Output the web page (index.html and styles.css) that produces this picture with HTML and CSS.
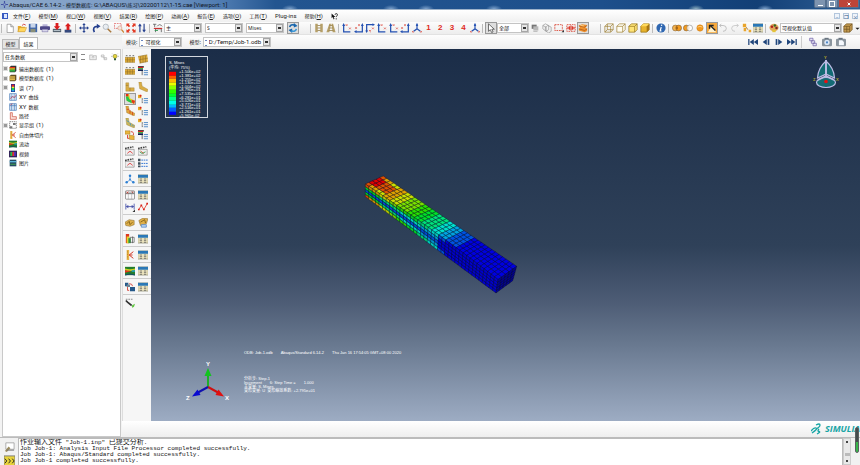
FILE: index.html
```html
<!DOCTYPE html>
<html lang="zh-CN">
<head>
<meta charset="utf-8">
<title>Abaqus/CAE 6.14-2</title>
<link rel="stylesheet" href="styles.css">
</head>
<body>
<svg class="sprite" aria-hidden="true">
  <symbol id="new" viewBox="0 0 12 12"><path d="M2.500 1.500h4.500l3 3v7h-7.500z" fill="#fff" stroke="#777" stroke-width=".7"/><path d="M7 1.500v3h3" fill="#ddd" stroke="#777" stroke-width=".7"/></symbol>
  <symbol id="open" viewBox="0 0 12 12"><path d="M1 10.500V3.500h3.500l1 1h4v6z" fill="#e8a92c"/><path d="M1 10.500l2-5h8.500l-2 5z" fill="#ffd75e" stroke="#b9821a" stroke-width=".5"/><path d="M6 3q2-3 4.500-.5" fill="none" stroke="#c33" stroke-width="1"/></symbol>
  <symbol id="save" viewBox="0 0 12 12"><rect x="1" y="1" width="10" height="10" fill="#3f66ac"/><rect x="3" y="1" width="6" height="4.500" fill="#c9d6ea"/><rect x="3" y="7" width="6" height="4" fill="#8b8f78"/></symbol>
  <symbol id="print" viewBox="0 0 12 12"><path d="M3 1.500h6v3H3z" fill="#b9b5d8"/><rect x="0" y="4" width="12" height="4.500" rx="1" fill="#4d4788"/><path d="M2.500 7.500h7v3h-7z" fill="#d9d7ec" stroke="#4d4788" stroke-width=".5"/></symbol>
  <symbol id="load" viewBox="0 0 12 12"><path d="M1 7h10v4H1z" fill="#56636f"/><path d="M2 9h8" stroke="#c7d1d8"/><path d="M4.300 0h3.400v4h2L6 8.500 2.300 4h2z" fill="#da1e1e"/></symbol>
  <symbol id="store" viewBox="0 0 12 12"><path d="M2 8h8v3.500H2z" fill="#35497d"/><path d="M4.300 8.500h3.400V4h2L6 0 2.300 4h2z" fill="#da1e1e"/></symbol>
  <symbol id="pan" viewBox="0 0 12 12"><path d="M6 0l2 2.500H6.700v2.800h2.800V4L12 6 9.500 8V6.700H6.700v2.800H8L6 12 4 9.500h1.300V6.700H2.500V8L0 6l2.500-2v1.300h2.800V2.500H4z" fill="#26418f"/></symbol>
  <symbol id="rotate" viewBox="0 0 12 12"><path d="M4 11Q1 4 8 4" fill="none" stroke="#26418f" stroke-width="2"/><path d="M7 .8L11.500 4 7 7z" fill="#26418f"/></symbol>
  <symbol id="zoom" viewBox="0 0 12 12"><path d="M6.500 6.500L11 11" stroke="#a9793f" stroke-width="1.800"/><circle cx="4.500" cy="4.500" r="3.200" fill="#e9edf2" stroke="#adb4bc"/></symbol>
  <symbol id="zoombox" viewBox="0 0 12 12"><path d="M.5 .5h8v6h-8z" fill="none" stroke="#d44" stroke-width=".8" stroke-dasharray="2 1"/><circle cx="7" cy="6" r="2.500" fill="#f5e6de" stroke="#d8a08a" stroke-width=".8"/><path d="M9 8l3 3.500" stroke="#c8822e" stroke-width="1.500"/></symbol>
  <symbol id="fit" viewBox="0 0 12 12"><path d="M.5.500h4L3.300 1.700 5 3.500 3.500 5 1.700 3.300.5 4.500zM11.500.500h-4l1.200 1.200L7 3.500 8.500 5l1.800-1.700 1.200 1.200zM.5 11.500h4l-1.200-1.200L5 8.500 3.500 7 1.700 8.700.5 7.500zM11.500 11.500h-4l1.200-1.200L7 8.500 8.500 7l1.800 1.700 1.200-1.200z" fill="#e23822"/></symbol>
  <symbol id="updown" viewBox="0 0 12 12"><path d="M3.500 11V2M8.500 1v9" stroke="#26418f" stroke-width="1.400"/><path d="M1.300 4l2.200-3.500L5.700 4zM6.300 8l2.200 3.500L10.700 8z" fill="#26418f"/></symbol>
  <symbol id="field" viewBox="0 0 12 12"><path d="M0 1.500h4M2 1.500V5M5 4q3-4 6 0M3 11V7h7v4" fill="none" stroke="#555" stroke-width=".9"/><path d="M1 6.500h10" stroke="#cf2b2b" stroke-width="1.300"/><path d="M2 9h4" stroke="#2d9650"/></symbol>
  <symbol id="refresh" viewBox="0 0 12 12"><path d="M2 5q1-4 6-2.500" fill="none" stroke="#1766ae" stroke-width="2"/><path d="M7 0l4.500 3.500L7 5.500zM5 6.500L.5 8.500 5 12z" fill="#1766ae"/><path d="M10 7q-1 4-6 2.500" fill="none" stroke="#3b97d6" stroke-width="2"/></symbol>
  <symbol id="para" viewBox="0 0 12 12"><path d="M1.500 1h3v10h-3zM7.500 1h3v10h-3z" fill="#b59f68"/><path d="M4 3h4M4 6h4M4 9h4" stroke="#9b8550"/></symbol>
  <symbol id="persp" viewBox="0 0 12 12"><path d="M4 1h2L4 11H.5zM6.500 1h2l3 10H8z" fill="#b59f68"/><path d="M4 3h4M4 6h4M3 9h6" stroke="#9b8550"/></symbol>
  <symbol id="ax1" viewBox="0 0 12 12"><path d="M2 2v8.500h8" fill="none" stroke="#2451b2" stroke-width="1.500"/><path d="M.3 3.500L2 0l1.700 3.500z" fill="#2451b2"/><path d="M4.500 1.500l2 2m0-2l-2 2M8.500 5.500l2 2m0-2l-2 2" stroke="#dc5146" stroke-width=".9"/></symbol>
  <symbol id="ax2" viewBox="0 0 12 12"><path d="M10 2v8.500H2" fill="none" stroke="#2451b2" stroke-width="1.500"/><path d="M8.300 3.500L10 0l1.700 3.500zM3 8.500L0 10.500 3 12z" fill="#2451b2"/><path d="M5 1.500l2 2m0-2l-2 2M1.500 5l2 2m0-2l-2 2" stroke="#dc5146" stroke-width=".9"/></symbol>
  <symbol id="ax3" viewBox="0 0 12 12"><path d="M2 10V2h8" fill="none" stroke="#2451b2" stroke-width="1.500"/><path d="M.3 9L2 12l1.700-3zM9 .3L12 2 9 3.700z" fill="#2451b2"/><path d="M8.500 5.500l2 2m0-2l-2 2M5 9l2 2m0-2H5" stroke="#dc5146" stroke-width=".9"/></symbol>
  <symbol id="iso" viewBox="0 0 12 12"><path d="M6 1v6L2 10M6 7l4 3" fill="none" stroke="#2451b2" stroke-width="1.400"/><path d="M4.500 3.500L6 0l1.500 3.500z" fill="#2451b2"/><path d="M0 9.500l2 2m0-2l-2 2M10 9.500l2 2m0-2l-2 2" stroke="#dc5146" stroke-width=".9"/></symbol>
  <symbol id="cursor" viewBox="0 0 12 12"><path d="M3 1v9l2.200-2 1.600 3.500 1.700-.8L7 7.500h3z" fill="#fff" stroke="#333" stroke-width=".8"/></symbol>
  <symbol id="grayset" viewBox="0 0 12 12"><path d="M2 2h6v5H2z" fill="#777"/><path d="M4 4h6v5H4z" fill="#b8b8b8"/><path d="M4 10h5" stroke="#aaa"/></symbol>
  <symbol id="wires" viewBox="0 0 12 12"><path d="M1 3l3-2 4 2v5l-3 2-4-3zM4 5l3-2 4 2v5l-3 2-4-3zM1 3l4 2v5" fill="none" stroke="#888" stroke-width=".7"/></symbol>
  <symbol id="selbox" viewBox="0 0 12 12"><path d="M1 2h9v7H1z" fill="none" stroke="#d8412f" stroke-width="1" stroke-dasharray="2 1"/><path d="M9 11h3V8z" fill="#333"/></symbol>
  <symbol id="selmulti" viewBox="0 0 12 12"><path d="M1 2h10v8H1z" fill="none" stroke="#d8412f" stroke-width="1" stroke-dasharray="2 1"/><path d="M1 6h3M8 6h3M4 4v4M8 4v4M6 3v6" stroke="#d82818" stroke-width="1.400"/></symbol>
  <symbol id="orangebox" viewBox="0 0 12 12"><path d="M1 3l4-1.500 6 1-2 3 2 1.500v2.500l-3 1.500-7-2V7l1.500-1z" fill="#f0922e"/><path d="M1 3.500l7 1.500 3-2M1 7l7 2 3-2" fill="none" stroke="#a34d0d" stroke-width=".8"/><path d="M3 3l4 .5" stroke="#ffe0a0"/></symbol>
  <symbol id="cube-w" viewBox="0 0 12 12"><path d="M1 4h7v7H1zM4 1h7v7H4zM1 4l3-3M8 4l3-3M8 11l3-3M1 11l3-3" fill="none" stroke="#9b7b2e" stroke-width=".8"/></symbol>
  <symbol id="cube-h" viewBox="0 0 12 12"><path d="M1 4h7v7H1zM1 4l3-3h7v7l-3 3M8 4l3-3" fill="#fffdf2" stroke="#9b7b2e" stroke-width=".8"/></symbol>
  <symbol id="cube-l" viewBox="0 0 12 12"><path d="M1 4l3-3h7v7l-3 3H1z" fill="#ffe477" stroke="#8d6b17" stroke-width=".8"/><path d="M1 4h7v7M8 4l3-3" fill="none" stroke="#8d6b17" stroke-width=".8"/></symbol>
  <symbol id="cube-s" viewBox="0 0 12 12"><path d="M1 4l3-3h7v7l-3 3H1z" fill="#e8b32c" stroke="#8d6b17" stroke-width=".8"/><path d="M8 4v7l3-3V1z" fill="#a67512"/><path d="M1 4h7l3-3H4z" fill="#ffd95b"/></symbol>
  <symbol id="info" viewBox="0 0 12 12"><circle cx="6" cy="6" r="5.500" fill="#2f67b1"/><path d="M7 2L6.500 3.500M6.300 5L5 9.500h1.500" fill="none" stroke="#fff" stroke-width="1.500"/></symbol>
  <symbol id="both" viewBox="0 0 12 12"><circle cx="4" cy="6" r="3.500" fill="#f5b24b" stroke="#6e5435" stroke-width=".6"/><circle cx="8" cy="6" r="3.500" fill="#f39b20" stroke="#6e5435" stroke-width=".6"/><path d="M6 3.500q2 2.500 0 5-2-2.500 0-5" fill="#7b4a12"/></symbol>
  <symbol id="halfset" viewBox="0 0 12 12"><circle cx="4" cy="6" r="3.500" fill="#f39b20" stroke="#6e5435" stroke-width=".6"/><circle cx="8" cy="6" r="3.500" fill="#fff" fill-opacity=".8" stroke="#777" stroke-width=".6"/></symbol>
  <symbol id="ball" viewBox="0 0 12 12"><circle cx="6" cy="6" r="3.800" fill="#f39b20" stroke="#c97610" stroke-width=".6"/><path d="M3 5q3-2 6 0" stroke="#ffd38a" fill="none"/></symbol>
  <symbol id="swap" viewBox="0 0 12 12"><path d="M0 0h12v12H0z" fill="#f6a83c"/><path d="M1 11l5-8 5 8z" fill="#fff2cf"/><path d="M3 7V3h5M4 3l6 6" fill="none" stroke="#222" stroke-width="1.600"/></symbol>
  <symbol id="undo" viewBox="0 0 12 12"><path d="M2 3h4q4 0 4 3.500T6 10M4 1L2 3l2 2" fill="none" stroke="#b7b7b7"/></symbol>
  <symbol id="redo" viewBox="0 0 12 12"><path d="M10 3H6Q2 3 2 6.500T6 10M8 1l2 2-2 2" fill="none" stroke="#c4c4c4"/></symbol>
  <symbol id="dots" viewBox="0 0 12 12"><path d="M1 1h4v4H1zM2 6h3v4H2zM8 8h3v3H8z" fill="#e9a52b"/><path d="M5 5l2 3" stroke="#996515"/></symbol>
  <symbol id="table" viewBox="0 0 12 12"><path d="M0 1h12v10H0z" fill="#f4ecc4" stroke="#6b6b55" stroke-width=".5"/><path d="M0 1h12v3.500H0z" fill="#2a78b7"/><path d="M2 6h3M7 6h3M2 8h3M7 8h3M2 10h3M7 10h3" stroke="#555" stroke-width=".9"/></symbol>
  <symbol id="palette" viewBox="0 0 12 12"><ellipse cx="6" cy="5.500" rx="5.500" ry="4.500" fill="#dfa55b"/><circle cx="3.500" cy="4.500" r="1.500" fill="#b21e1e"/><circle cx="7" cy="3" r="1.500" fill="#356b26"/><circle cx="9" cy="6" r="1.500" fill="#802525"/><path d="M4 8h4v3H4z" fill="#e4c43a"/></symbol>
  <symbol id="boxes" viewBox="0 0 12 12"><path d="M1 4l3-3h7v7l-3 3H1z" fill="#c49b50" stroke="#6f5220" stroke-width=".8"/><path d="M1 4h7v7M8 4l3-3M4.500 4v7M1 7.500h7" fill="none" stroke="#6f5220" stroke-width=".8"/></symbol>
  <symbol id="drop" viewBox="0 0 12 12"><path d="M1 4h10L6 9z" fill="#222"/></symbol>
  <symbol id="first" viewBox="0 0 12 12"><path d="M1 2.500v7" stroke="#21467c" stroke-width="1.500"/><path d="M7 2.500v7L2 6zM12 2.500v7L7 6z" fill="#21467c"/></symbol>
  <symbol id="prev" viewBox="0 0 12 12"><path d="M7 2.500v7L2 6z" fill="#21467c"/><path d="M9 2.500v7" stroke="#21467c" stroke-width="2"/></symbol>
  <symbol id="next" viewBox="0 0 12 12"><path d="M5 2.500v7L10 6z" fill="#21467c"/><path d="M3 2.500v7" stroke="#21467c" stroke-width="2"/></symbol>
  <symbol id="last" viewBox="0 0 12 12"><path d="M11 2.500v7" stroke="#21467c" stroke-width="1.500"/><path d="M5 2.500v7L10 6zM0 2.500v7L5 6z" fill="#21467c"/></symbol>
  <symbol id="windows" viewBox="0 0 12 12"><path d="M2 1.500h4v3H2zM4 4.500h4v3H4zM6 7.500h4v3H6z" fill="#e6e3f7" stroke="#7568a8" stroke-width=".9"/></symbol>
  <symbol id="camera" viewBox="0 0 12 12"><rect y="2" width="12" height="9" rx="1.500" fill="#8b959e"/><path d="M3 1h5v2H3z" fill="#687480"/><circle cx="6" cy="6.500" r="3.200" fill="#dbe7f5"/><circle cx="6" cy="6.500" r="1.300" fill="#4f86c5"/></symbol>
  <symbol id="camera2" viewBox="0 0 12 12"><rect y="2" width="12" height="9" rx="1.500" fill="#8b959e"/><path d="M3 1h5v2H3z" fill="#687480"/><path d="M3.500 4h4l2 2v4h-6z" fill="#f4f8fd"/></symbol>
  <symbol id="mesh" viewBox="0 0 12 12"><path d="M0 4h12v6H0z" fill="#dcaa3a"/><path d="M0 4h12M0 7h12M0 10h12M3 4v6M6 4v6M9 4v6" stroke="#8b6a24" stroke-width=".6"/><path d="M1 2h2M5 2h2M9 2h2" stroke="#555"/></symbol>
  <symbol id="mesh2" viewBox="0 0 12 12"><path d="M0 3l11-2 1 8-10 2z" fill="#dcaa3a"/><path d="M0 3l11-2M1 7l11-2M2 11l10-2M3 3v8M6 2v8M9 2v8" stroke="#8b6a24" stroke-width=".6" fill="none"/></symbol>
  <symbol id="opt" viewBox="0 0 12 12"><path d="M0 1h4v4H0z" fill="#e5ad25"/><circle cx="3" cy="2" r="1.200" fill="#d22"/><path d="M5 5v6M5 6h1M5 10h1" stroke="#555" stroke-width=".7"/><path d="M7 5.500h5M7 8h5M7 10.500h5" stroke="#3979bf" stroke-width="1"/></symbol>
  <symbol id="optrgb" viewBox="0 0 12 12"><path d="M0 0h7v2H0z" fill="#444"/><path d="M0 1h6v1.500H0z" fill="#d22"/><path d="M0 2.500h6V4H0z" fill="#3a3"/><path d="M0 4h6v2H0z" fill="#125"/><path d="M7 5.500h5M7 8h5M7 10.500h5" stroke="#3979bf"/><path d="M5 6v5" stroke="#555"/></symbol>
  <symbol id="ell" viewBox="0 0 12 12"><path d="M1 1h3.500v6H11v4H1z" fill="#d9ad45" stroke="#a08240" stroke-width=".5"/><path d="M1 4h3M6 7v4" stroke="#82652a" stroke-width=".6"/></symbol>
  <symbol id="bent" viewBox="0 0 12 12"><path d="M1 0h3l1 5 7 4-1 3-9-4z" fill="#d9ad45" stroke="#a08240" stroke-width=".5"/></symbol>
  <symbol id="contour" viewBox="0 0 12 12"><path d="M1 0h4l1 5 6 3-1 4-9-4z" fill="#e8d620"/><path d="M1 0h3v3H1z" fill="#e52a14"/><path d="M1 3h3l1 3 3 2v3L2 8z" fill="#24c44a"/><path d="M8 7l4 1-1 4-3-2z" fill="#e2361d"/></symbol>
  <symbol id="bentred" viewBox="0 0 12 12"><path d="M1 0h3l1 5 7 4-1 3-9-4z" fill="#e1a33a" stroke="#a08240" stroke-width=".5"/><path d="M2 4h3M6 5v4M9 7v4" stroke="#d44320"/></symbol>
  <symbol id="bentblue" viewBox="0 0 12 12"><path d="M1 0h3l1 5 7 4-1 3-9-4z" fill="#c9b65a" stroke="#a08240" stroke-width=".5"/><path d="M2 3l3 2M6 6l1 3M9 8l1 2" stroke="#3f92c6"/></symbol>
  <symbol id="morph" viewBox="0 0 12 12"><path d="M0 1h6v4H0zM5 6l6 1v5l-6-1z" fill="#e9b53c" stroke="#96701c" stroke-width=".5"/><path d="M7 2q4 0 3 4M3 6v4h2" fill="none" stroke="#d62b1e"/></symbol>
  <symbol id="clap" viewBox="0 0 12 12"><path d="M0 4h11v7H0z" fill="#eee" stroke="#666" stroke-width=".6"/><path d="M0 3l10-2" stroke="#444" stroke-width="2" stroke-dasharray="2 1"/><path d="M3 9q3-5 6 0" fill="none" stroke="#d33"/></symbol>
  <symbol id="clap2" viewBox="0 0 12 12"><path d="M0 4h11v7H0z" fill="#eee" stroke="#666" stroke-width=".6"/><path d="M0 3l10-2" stroke="#444" stroke-width="2" stroke-dasharray="2 1"/><path d="M2 7l3 2 4-2" fill="none" stroke="#2b9b4b"/><path d="M3 6l4 3" stroke="#c53"/></symbol>
  <symbol id="list" viewBox="0 0 12 12"><path d="M0 1h3v3H0zM0 5h3v3H0zM0 9h3v2H0z" fill="#40505c"/><path d="M4 2.500h8M4 6.500h8M4 10h8" stroke="#3979d5" stroke-width="1.200" stroke-dasharray="2 .8"/></symbol>
  <symbol id="tri" viewBox="0 0 12 12"><path d="M6 2v5L2 10M6 7l4 3" fill="none" stroke="#5b99da"/><circle cx="6" cy="2" r="1.500" fill="#2c7fd2"/><circle cx="2" cy="10" r="1.500" fill="#2c7fd2"/><circle cx="10" cy="10" r="1.500" fill="#2c7fd2"/><circle cx="6" cy="6.500" r="1" fill="#2c7fd2"/></symbol>
  <symbol id="xytable" viewBox="0 0 12 12"><rect x=".5" y="1" width="11" height="10" rx="1" fill="#fafafa" stroke="#666" stroke-width=".8"/><path d="M.5 4h11" stroke="#888" stroke-width="2"/><path d="M4 4v7M8 4v7" stroke="#999" stroke-width=".6"/><path d="M2 2l2 2M4 2L2 4M8 2l1 1 1-1" stroke="#e04030"/></symbol>
  <symbol id="dim" viewBox="0 0 12 12"><path d="M1 2v7M11 2v7M2 5.500h8" stroke="#4650a8"/><path d="M1 5.500l3-2v4zM11 5.500l-3-2v4z" fill="#4650a8"/><path d="M9 12h3V9z" fill="#333"/></symbol>
  <symbol id="zig" viewBox="0 0 12 12"><path d="M1 9l3-5 3 5 4-7" fill="none" stroke="#e23b2d" stroke-width="1"/><path d="M0 8h2v2H0zM3 3h2v2H3zM6 8h2v2H6zM10 1h2v2h-2z" fill="#d91f16"/></symbol>
  <symbol id="sheet" viewBox="0 0 12 12"><path d="M0 5l5-3 6 1v5L6 10 1 9z" fill="#dfb04b" stroke="#806326" stroke-width=".6"/><path d="M2 7l3-3 1 4 3-3" fill="none" stroke="#7c5b12"/></symbol>
  <symbol id="sheet2" viewBox="0 0 12 12"><path d="M1 3l5-3 6 1-2 6-7 2z" fill="#dfb04b" stroke="#806326" stroke-width=".6"/><path d="M4 8h6v3H4z" fill="#b9d6f5" stroke="#5b8cc9"/><path d="M3 5l5-3 1 4" fill="none" stroke="#7c5b12"/></symbol>
  <symbol id="cut" viewBox="0 0 12 12"><path d="M1 0h4v11H1z" fill="#dc351d"/><path d="M2 3h3v8H2z" fill="#e4d329"/><path d="M4 5h3v6H4z" fill="#30a342"/><path d="M6 4h5v6H6zM9 3v8" fill="none" stroke="#555" stroke-width=".8"/></symbol>
  <symbol id="free" viewBox="0 0 12 12"><path d="M2 0h3v12H2z" fill="#e8b146"/><path d="M5 6l5-4M5 6l5 4M5 6h4" stroke="#d23a2a" stroke-width="1.200"/><path d="M3 1v10" stroke="#b8841a" stroke-dasharray="1 1"/></symbol>
  <symbol id="stream" viewBox="0 0 12 12"><path d="M0 1h12v10H0z" fill="#247d2d"/><path d="M0 3q6 2 12 0v2Q6 7 0 5z" fill="#c9cf22"/><path d="M0 5l8 1-8 2z" fill="#e2361d"/><path d="M8 5h4v2H8z" fill="#22a0b8"/><path d="M0 11q6-3 12 0" stroke="#16407c" fill="none"/></symbol>
  <symbol id="overlay" viewBox="0 0 12 12"><path d="M0 1h4v4H0zM6 6h6v5H6z" fill="#245889"/><path d="M5 2q4 0 4 3M3 6v4h2" fill="none" stroke="#d3362a"/><path d="M2 3h4v3H2z" fill="#6b8494"/></symbol>
  <symbol id="probe" viewBox="0 0 12 12"><path d="M1 3l2 2 5 4" fill="none" stroke="#333" stroke-width="2"/><path d="M1 1.500h9" stroke="#777" stroke-dasharray="2 1"/><path d="M8 9l4-2-1 3-2 2z" fill="#62c744"/></symbol>
  <symbol id="odb" viewBox="0 0 12 12"><path d="M1 3l2-2h8v8l-2 2H1z" fill="#333"/><path d="M1 3h8v2H1z" fill="#e7381c"/><path d="M1 5h8v2H1z" fill="#e8dc24"/><path d="M1 7h8v3H1z" fill="#30ad41"/></symbol>
  <symbol id="mdb" viewBox="0 0 12 12"><path d="M1 3l2-2h8v8l-2 2H1z" fill="#645025"/><path d="M1 3.500h8v2H1zM1 6.500h8v3H1z" fill="#dfb94e"/></symbol>
  <symbol id="spectrum" viewBox="0 0 12 12"><path d="M3 0h6v12H3z" fill="#1f2f92"/><path d="M4 1h4v3H4z" fill="#e22"/><path d="M4 4h4v2H4z" fill="#ee2"/><path d="M4 6h4v3H4z" fill="#2c5"/><path d="M4 9h4v2H4z" fill="#2ad"/></symbol>
  <symbol id="xy" viewBox="0 0 12 12"><path d="M1 1h10v10H1z" fill="#dce9f8" stroke="#4377b5"/><path d="M4 1v10M8 1v10M1 6h10" stroke="#4377b5" stroke-width=".6"/><path d="M2 9l3-4 3 2 3-4" fill="none" stroke="#c34"/></symbol>
  <symbol id="xyd" viewBox="0 0 12 12"><path d="M1 1h10v10H1z" fill="#dce9f8" stroke="#4377b5"/><path d="M4 1v10M8 1v10M1 4h10" stroke="#4377b5"/><path d="M2 3l3-2" stroke="#c34"/></symbol>
  <symbol id="path" viewBox="0 0 12 12"><path d="M2 1h3v6h6v4H2z" fill="#fbe0d9" stroke="#c84b3a"/></symbol>
  <symbol id="group" viewBox="0 0 12 12"><path d="M1 1h10v10H1z" fill="#fff" stroke="#555" stroke-dasharray="2 1"/><path d="M1 8h4v3H1zM6 3h4v3H6z" fill="#777"/></symbol>
  <symbol id="movie" viewBox="0 0 12 12"><path d="M0 1h12v10H0z" fill="#332559"/><path d="M2 3h3v6H2z" fill="#2aba45"/><path d="M5 3h3v6H5z" fill="#d33"/><path d="M8 3h2v6H8z" fill="#53d"/></symbol>
  <symbol id="image" viewBox="0 0 12 12"><path d="M1 1h10v10H1z" fill="#244a63"/><path d="M1 3h10v2H1z" fill="#5db3d8"/><path d="M2 7h8v2H2z" fill="#3b8c54"/></symbol>
  <symbol id="folder" viewBox="0 0 12 12"><path d="M1 3h4l1 1h5v6H1z" fill="#eee" stroke="#999" stroke-width=".8"/><path d="M6 8V5M4.500 6.500L6 5l1.500 1.500" stroke="#aaa" fill="none"/></symbol>
  <symbol id="link" viewBox="0 0 12 12"><path d="M2 3h4v3H2zM6 7h4v3H6zM4 5l4 4" fill="none" stroke="#aaa"/></symbol>
  <symbol id="bulb" viewBox="0 0 12 12"><circle cx="6" cy="5" r="3" fill="#e6d53f" stroke="#6a6a24" stroke-width=".7"/><path d="M4.500 8h3v3h-3z" fill="#335a35"/><path d="M0 5h2M10 5h2M2 1l1 1M10 1L9 2" stroke="#999"/></symbol>
  <symbol id="help" viewBox="0 0 12 12"><path d="M1 1v8l2-2 1.500 4 1.500-1-1.500-3h3z" fill="#111"/><path d="M7 3q0-2 2-2t2 2-2 3v1M9 9v2" fill="none" stroke="#111" stroke-width="1.400"/></symbol>
  <symbol id="msg" viewBox="0 0 12 12"><path d="M2 2h9v7H2z" fill="#fff" stroke="#888" stroke-width=".7"/><path d="M1 11l4-5 2 2-4 4z" fill="#9b8b5e"/><path d="M3 10h8" stroke="#777"/></symbol>
  <symbol id="prompt" viewBox="0 0 12 12"><path d="M0 1h12v11H0z" fill="#e9d43b" stroke="#777"/><path d="M1 4l2 2.500L1 9M5 4l2 2.500L5 9M9 4l2 2.500L9 9" fill="none" stroke="#222"/></symbol>
</svg>

<div class="app">
  <header class="titlebar">
    <svg class="appicon" viewBox="0 0 12 12" aria-hidden="true"><path d="M6 0v4M6 8v4M0 6h4M8 6h4" stroke="#4453a5" stroke-width="2"/><circle cx="6" cy="6" r="2" fill="none" stroke="#4453a5"/></svg>
    <h1><span class="en">Abaqus/CAE 6.14-2 - </span>模型数据库<span class="en">: G:\ABAQUS\</span>练习<span class="en">\20200112\1-15.cae [Viewport: 1]</span></h1>
    <div class="winbtns"><button class="wmin" aria-label="最小化"></button><button class="wmax" aria-label="还原"></button><button class="wclose" aria-label="关闭"><svg viewBox="0 0 6 6"><path d="M1 1l4 4M5 1L1 5" stroke="#fff" stroke-width="1.500"/></svg></button></div>
  </header>

  <nav class="menubar">
    <span class="doc" aria-hidden="true"></span>
    <button>文件<span class="en">(<u>F</u>)</span></button><button>模型<span class="en">(<u>M</u>)</span></button><button>视口<span class="en">(<u>W</u>)</span></button><button>视图<span class="en">(<u>V</u>)</span></button><button>结果<span class="en">(<u>R</u>)</span></button><button>绘图<span class="en">(<u>P</u>)</span></button><button>动画<span class="en">(<u>A</u>)</span></button><button>报告<span class="en">(<u>E</u>)</span></button><button>选项<span class="en">(<u>O</u>)</span></button><button>工具<span class="en">(<u>T</u>)</span></button><button><span class="en">Plug-ins</span></button><button>帮助<span class="en">(<u>H</u>)</span></button>
    <button aria-label="help"><svg><use href="#help"/></svg></button>
    <div class="mdi"><button aria-label="min">–</button><button aria-label="restore">❐</button><button aria-label="close">×</button></div>
  </nav>

  <div class="toolbar">
    <div class="grp w6" data-icons="new open save print load store"></div>
    <div class="grp w6" data-icons="pan rotate zoom zoombox fit updown"></div>
    <div class="grp" data-icons="field">
      <label class="combo mid"><select aria-label="变量类型"><option>主</option></select></label>
      <label class="combo mid"><select aria-label="输出变量"><option>S</option></select></label>
      <label class="combo mid"><select aria-label="分量"><option>Mises</option></select></label>
      <button class="tool on" aria-label="refresh"><svg><use href="#refresh"/></svg></button>
    </div>
    <div class="grp gap" data-icons="para persp"></div>
    <div class="grp w12" data-icons="ax1 ax2 ax3 ax1 ax1 ax2 iso">
      <button class="tool num">1</button><button class="tool num">2</button><button class="tool num">3</button><button class="tool num">4</button>
      <button class="tool" aria-label="iso"><svg><use href="#iso"/></svg></button>
    </div>
    <div class="grp" data-on="cursor" data-icons="cursor">
      <label class="combo small"><select aria-label="选择"><option>全部</option></select></label>
      <span class="set" data-on="orangebox" data-icons="grayset wires selbox selmulti orangebox"></span>
    </div>
    <div class="grp gap" data-icons="cube-w cube-h cube-l cube-s"></div>
    <div class="grp" data-icons="info"></div>
    <div class="grp w8" data-on="swap" data-icons="both halfset ball swap undo redo dots table"></div>
    <div class="grp rest" data-icons="palette">
      <label class="combo wide"><select aria-label="颜色"><option>可视化默认值</option></select></label>
      <button class="tool" aria-label="boxes"><svg><use href="#boxes"/></svg></button>
      <button class="tool thin" aria-label="more"><svg><use href="#drop"/></svg></button>
    </div>
  </div>

  <div class="main">
    <aside class="side">
      <div class="tabs"><button>模型</button><button class="active">结果</button></div>
      <div class="panel">
        <div class="panelhead">
          <label class="combo session"><select aria-label="任务数据"><option>任务数据</option></select></label>
          <span class="spin"></span>
          <span class="set" data-icons="folder link bulb"></span>
        </div>
        <ul class="tree">
          <li class="ex"><svg><use href="#odb"/></svg>输出数据库 <span class="en">(1)</span></li>
          <li class="ex"><svg><use href="#mdb"/></svg>模型数据库 <span class="en">(1)</span></li>
          <li class="ex"><svg><use href="#spectrum"/></svg>谱 <span class="en">(7)</span></li>
          <li><svg><use href="#xy"/></svg><span class="en">XY</span> 曲线</li>
          <li><svg><use href="#xyd"/></svg><span class="en">XY</span> 数据</li>
          <li><svg><use href="#path"/></svg>路径</li>
          <li class="ex"><svg><use href="#group"/></svg>显示组 <span class="en">(1)</span></li>
          <li><svg><use href="#free"/></svg>自由体切片</li>
          <li><svg><use href="#stream"/></svg>流动</li>
          <li><svg><use href="#movie"/></svg>视频</li>
          <li><svg><use href="#image"/></svg>图片</li>
        </ul>
      </div>
    </aside>

    <section class="work">
      <div class="context">
        <label class="ctx">模块: <span class="combo grip mod"><select><option>可视化</option></select></span></label>
        <label class="ctx">模型: <span class="combo grip file"><select><option>D:/Temp/Job-1.odb</option></select></span></label>
        <div class="player"><span class="set" data-icons="first prev next last"></span></div>
        <div class="snap" data-icons="windows camera camera2"></div>
      </div>
      <div class="stage">
        <div class="toolbox">
          <div data-icons="mesh mesh2 mesh optrgb"></div>
          <div data-on="contour" data-icons="ell bent contour opt bentred opt bentblue opt morph optrgb"></div>
          <div data-icons="clap clap2 clap list"></div>
          <div data-icons="tri table"></div>
          <div data-icons="xytable table dim zig"></div>
          <div data-icons="sheet sheet2"></div>
          <div data-icons="cut table"></div>
          <div data-icons="free table"></div>
          <div data-icons="stream table"></div>
          <div data-icons="overlay table"></div>
          <div data-icons="probe"></div>
        </div>
        <div class="viewport">
          <svg class="scene" viewBox="151 50 709 371" preserveAspectRatio="xMinYMin meet" role="img" aria-label="应力云图">
            <g id="beam" stroke="#050a20" stroke-width=".35" stroke-linejoin="round"></g>
            <g stroke-width="2" fill="none"><path d="M208 388V375" stroke="#1fae2a"/><path d="M208 388l11 6" stroke="#d01010"/><path d="M208 388l-11 6" stroke="#1010b0"/></g>
            <path d="M204.500 377l3.500-8 3.500 8z" fill="#12c41f"/><path d="M215.500 396l3-5.500 5.500 7z" fill="#e01010"/><path d="M200.500 396l-3-5.500-5.500 7z" fill="#0a0ad0"/>
            <g class="axis" fill="#fff"><text x="206" y="367">Y</text><text x="225" y="401">X</text><text x="186" y="401">Z</text></g>
            <g fill="#146b74" stroke="#bdbde6" stroke-width="1.200"><path d="M826 62q-8 7-8.500 17l8.500-4zM826 62q8 7 8.500 17l-8.500-4z"/><ellipse cx="826" cy="83.500" rx="9.500" ry="5"/><path d="M826 61v16M826 77l-8 4M826 77l8 4" fill="none" stroke-width="1.800"/></g>
            <circle cx="826" cy="82.500" r="1.800" fill="#e81010"/>
            <g class="axis2" fill="#b9ab2d"><text x="824" y="60">Y</text><text x="813" y="82">Z</text><text x="836" y="82">X</text></g>
          </svg>
          <div class="legend">
            <div>S, Mises</div><div>(平均: 75%)</div>
            <ol id="scale"></ol>
          </div>
          <div class="caption">
            <p><span>ODB: Job-1.odb</span><span>Abaqus/Standard 6.14-2</span><span>Thu Jan 16 17:54:05 GMT+08:00 2020</span></p>
            <div>分析步: Step-1</div>
            <div><span>Increment</span><span>6: Step Time =</span>1.000</div>
            <div>主变量: S, Mises</div>
            <div>变形变量: U&nbsp; 变形缩放系数: +2.795e+01</div>
          </div>
        </div>
      </div>
      <footer class="brand">
        <svg viewBox="0 0 12 12" aria-hidden="true"><path d="M5 2q4-2 4 0t-4 4M1 10q6-4 4-5T0 8M8 6q-2 2 0 2.500T6 11" fill="none" stroke="#18a5a5" stroke-width="1.300"/></svg>
        <span>SIMULIA</span>
      </footer>
    </section>
  </div>

  <div class="messages">
    <div class="msgtabs"><button aria-label="消息"><svg><use href="#msg"/></svg></button><button aria-label="命令"><svg><use href="#prompt"/></svg></button></div>
    <div class="log">
      <div class="zh"><b>作业输入文件</b> "Job-1.inp" <b>已提交分析</b>.</div>
      <div>Job Job-1: Analysis Input File Processor completed successfully.</div>
      <div>Job Job-1: Abaqus/Standard completed successfully.</div>
      <div>Job Job-1 completed successfully.</div>
    </div>
    <div class="scroll"><i></i></div>
    <div class="gauge"></div>
  </div>
</div>
<script src="app.js"></script>
</body>
</html>
```

FILE: styles.css
```css
* { box-sizing: border-box; }
body { margin: 0; font: 5px/8px "Noto Sans CJK SC", sans-serif; color: #222; background: #f3f3f3; overflow: hidden; }
.en { font-family: Roboto, sans-serif; font-size: 6px; }
button { font: inherit; color: inherit; border: 0; padding: 0; margin: 0; background: none; }
.sprite { position: absolute; width: 0; height: 0; }
.app { display: flex; flex-direction: column; height: 100vh; }

.titlebar { position: relative; display: flex; align-items: center; height: 10px; flex: none;
  background:
    radial-gradient(ellipse 8px 4px at 290px 9px, #7fa3cc, transparent),
    radial-gradient(ellipse 8px 4px at 391px 9px, #7fa3cc, transparent),
    radial-gradient(ellipse 8px 4px at 426px 9px, #7fa3cc, transparent),
    radial-gradient(ellipse 8px 4px at 494px 9px, #7fa3cc, transparent),
    radial-gradient(ellipse 8px 4px at 696px 9px, #8fb0bf, transparent),
    radial-gradient(ellipse 8px 4px at 765px 9px, #7fa3cc, transparent),
    linear-gradient(90deg, #8ea9cb 0, #7598c4 18%, #4d7ab0 26%, #235590 32%, #1d4f8b 70%, #123f76 88%, #2e5f96 100%);
  border-bottom: 1px solid #9db2c9; }
.appicon { width: 7px; height: 7px; margin: 0 1px; }
.titlebar h1 { margin: 0; font-weight: 400; font-size: 5px; color: #10151c; white-space: nowrap; }
.winbtns { display: flex; margin-left: auto; align-self: flex-start; padding-right: 1px; }
.winbtns button { width: 12px; height: 8px; background: #7e94b0; border: 1px solid #57708f; border-top: 0; border-radius: 0 0 2px 2px; }
.winbtns .wmin::before { content: ""; display: block; width: 5px; height: 1px; margin: 3px auto 0; background: #fff; }
.winbtns .wmax::before { content: ""; display: block; width: 4px; height: 4px; margin: 1px auto 0; border: 1px solid #fff; }
.winbtns .wclose { width: 21px; background: #bd4439; display: flex; align-items: center; justify-content: center; }
.wclose svg { width: 4px; height: 4px; }

.menubar { display: flex; align-items: center; height: 12px; flex: none; background: linear-gradient(#fff, #f0f0f0); padding-left: 2px; gap: 8px; }
.menubar button { white-space: nowrap; line-height: 10px; }
.menubar button svg { width: 7px; height: 7px; display: block; }
.doc { width: 6px; height: 6px; margin-right: -3px; background: #dce6ff; border: 1px solid #3759c1; border-left-width: 2px; }
.mdi { display: flex; gap: 3px; margin-left: auto; padding-right: 2px; }
.mdi button { width: 6px; height: 6px; line-height: 5px; border: 1px solid #b3c6dc; color: #27517f; background: #eef4fb; }

.toolbar { display: flex; height: 13px; flex: none; background: linear-gradient(#fcfcfc, #ededed); border-bottom: 1px solid #e2e2e2; }
.grp { display: flex; align-items: center; flex: none; }
.grp::before { content: ""; flex: none; width: 4px; height: 9px; background: linear-gradient(#bbb, #bbb) 1px 0 / 1px 100% no-repeat; }
.w6 { width: 74px; }
.w12 { width: 144px; }
.w8 { width: 97px; }
.gap { margin-left: 10px; }
.tool { width: 12px; flex: 0 1 auto; min-width: 0; height: 12px; display: flex; align-items: center; justify-content: center; }
.tool svg { flex: none; width: 10px; height: 10px; }
.tool.on { background: #dedede; border: 1px solid #999; }
.rest { flex: 1; }
.rest .thin { width: 6px; }
.tool.thin svg { width: 5px; height: 5px; }
.num { color: #e02a1c; font: bold 8px/12px "Liberation Sans", sans-serif; }
.set { display: flex; }

.combo { position: relative; display: block; flex: none; height: 10px; background: #fff; border: 1px solid #c4c4c4; }
.combo select { appearance: none; display: block; width: 100%; height: 8px; border: 0; margin: 0; padding: 0 6px 0 1px; background: none; font: 5px/8px "Open Sans", "Noto Sans CJK SC", sans-serif; color: #111; }
.combo::after { content: ""; position: absolute; right: 0; top: 0; bottom: 0; width: 5px; border: 1px solid #a5a5a5; background: linear-gradient(#333, #333) 50% 50% / 3px 2px no-repeat #e5e5e5; pointer-events: none; }
.mid { width: 38px; margin-right: 3px; }
.small { width: 32px; }
.wide { width: 62px; }

.main { display: flex; flex: 1; min-height: 0; }
.side { flex: 0 0 122px; min-width: 0; display: flex; flex-direction: column; padding-top: 2px; }
.tabs { display: flex; align-items: flex-end; height: 12px; padding-left: 2px; }
.tabs button { width: 17px; height: 10px; background: #e4e4e4; border: 1px solid #bbb; }
.tabs .active { width: 19px; height: 12px; background: #fff; border-bottom: 0; }
.panel { flex: 1; margin: 0 1px 0 2px; background: #fff; border: 1px solid #c9c9c9; }
.panelhead { display: flex; align-items: center; height: 14px; }
.session { width: 75px; }
.spin { flex: none; width: 4px; height: 6px; margin: 0 2px 0 3px; border: solid #888; border-width: 1px 0; }
.panelhead .set { flex: 1; min-width: 0; }
.panelhead .tool svg { width: 8px; height: 8px; }
.tree { list-style: none; margin: 0; padding: 0; height: 104px; display: grid; grid-auto-rows: 1fr; }
.tree li { display: flex; align-items: center; gap: 2px; padding-left: 6px; white-space: nowrap; position: relative; }
.tree svg { width: 8px; height: 8px; }
.tree .ex::before { content: ""; position: absolute; left: 1px; width: 3px; height: 3px; background: #999; outline: 1px solid #ddd; }

.work { flex: 1; min-width: 0; display: flex; flex-direction: column; }
.context { display: flex; align-items: center; height: 14px; flex: none; padding-left: 4px; gap: 4px; background: linear-gradient(#fdfdfd, #eee); }
.ctx { display: flex; align-items: center; gap: 2px; margin-right: 3px; white-space: nowrap; }
.mod { width: 43px; }
.file { width: 68px; }
.grip select { padding-left: 5px; }
.grip::before { content: ""; position: absolute; left: 1px; top: 2px; width: 2px; height: 4px; border: solid #6a86c0; border-width: 1px 0; }
.file select { font: 6px/8px Roboto, sans-serif; }
.player { margin-left: auto; border-right: 1px solid #ccc; padding-right: 3px; }
.player .tool { width: 13px; }
.snap { display: flex; width: 42px; margin-right: 12px; }
.snap .tool { width: 14px; }
.stage { display: flex; flex: 1; min-height: 0; }
.toolbox { flex: 0 0 29px; background: #f6f6f6; padding-top: 1px; border-left: 1px solid #ddd; }
.toolbox > div { display: grid; grid-template-columns: 13px 13px; grid-auto-rows: 12px; justify-content: center; padding: 2px 0 1px; border-top: 1px solid #ccc; }
.toolbox > div:first-child { border-color: transparent; }

.viewport { position: relative; flex: 1; min-width: 0; overflow: hidden; background: linear-gradient(#1b2d48 0, #2f4159 53%, #4d5c75 68%, #65758c 78%, #9dacc3 100%); }
.scene { display: block; width: 100%; }
.axis { font: bold 6px "Liberation Sans", sans-serif; }
.axis2 { font: bold 4px "Liberation Sans", sans-serif; }
.legend { position: absolute; left: 14px; top: 7px; width: 43px; height: 62px; border: 1px solid #d3d8df; padding: 3px; color: #fff; font: 4px/5px "Liberation Sans", "Noto Sans CJK SC", sans-serif; white-space: nowrap; }
.legend ol { list-style: none; margin: 0; padding: 0; height: 47px; display: grid; grid-auto-rows: 1fr; }
.legend li { display: flex; align-items: center; line-height: 3px; }
.legend i { width: 7px; height: 100%; margin-right: 3px; transform: translateY(50%); }
.caption { position: absolute; left: 93px; bottom: 28px; color: #fff; font: 4px/4px "Liberation Sans", "Noto Sans CJK SC", sans-serif; white-space: nowrap; }
.caption p { margin: 0 0 22px; }
.caption div { height: 4px; }
.caption span { margin-right: 8px; }
.brand { display: flex; align-items: center; justify-content: flex-end; height: 16px; flex: none; background: linear-gradient(#fff, #eee); color: #18a5a5; font: italic bold 9px/14px "Open Sans", sans-serif; }
.brand svg { width: 12px; height: 12px; margin-right: 2px; }

.messages { position: relative; display: flex; height: 28px; flex: none; border-top: 1px solid #bbb; background: #f1f1f1; }
.msgtabs { width: 18px; flex: none; display: flex; flex-direction: column; align-items: center; gap: 3px; padding-top: 3px; }
.msgtabs svg { display: block; width: 11px; height: 11px; }
.log { flex: 1; background: #fff; border: 1px solid #bbb; border-bottom: 0; padding: 0 1px; font: 6px/6px "Liberation Mono", "Noto Sans CJK SC", monospace; color: #111; white-space: nowrap; overflow: hidden; }
.log div { height: 6px; }
.log .zh { height: 7px; }
.log b { font-weight: 400; font-size: 7px; line-height: 6px; }
.scroll { width: 8px; margin-right: 9px; background: #e9e9e9; border: 1px solid #ccc; display: flex; flex-direction: column; align-items: center; justify-content: space-between; padding: 2px 0; }
.scroll::before, .scroll::after { content: ""; width: 2px; height: 2px; background: #444; }
.scroll i { width: 5px; height: 3px; background: #bbb; margin-top: 6px; }
.gauge { position: absolute; right: 1px; top: -11px; width: 4px; height: 26px; border-radius: 2px; background: linear-gradient(#444c4c 60%, #38b54a 60%); border: 1px solid #5b6060; }
```

FILE: app.js
```js
// Expand each data-icons list into tool buttons placed before existing children.
document.querySelectorAll('[data-icons]').forEach(box => {
  const html = box.dataset.icons.split(' ').map(id =>
    `<button class="tool${box.dataset.on === id ? ' on' : ''}" aria-label="${id}"><svg><use href="#${id}"/></svg></button>`).join('');
  box.insertAdjacentHTML('afterbegin', html);
});

const bands = ['#0000ff', '#005dff', '#00b9ff', '#00ffe8', '#00ff8b', '#00ff2e', '#2eff00', '#8bff00', '#e8ff00', '#ffb900', '#ff5d00', '#ff0000'];
const values = ['+1.506e+02', '+1.381e+02', '+1.255e+02', '+1.130e+02', '+1.004e+02', '+8.790e+01', '+7.535e+01', '+6.281e+01', '+5.026e+01', '+3.771e+01', '+2.516e+01', '+1.261e+01', '+5.965e-02'];
document.getElementById('scale').innerHTML = values.map((v, i) =>
  `<li><i style="background:${bands[11 - i] || 'transparent'}"></i>${v}</li>`).join('');

// Corners of the three visible faces of the beam.
const A = [365.3, 185], B = [383.3, 177], C = [516.7, 267.3], D = [498, 280.5];
const E = [496, 294], F = [512.7, 281.7], G = [365.3, 197.7];
const mix = (p, q, t) => [p[0] + (q[0] - p[0]) * t, p[1] + (q[1] - p[1]) * t];
const shade = (hex, k) => '#' + [1, 3, 5].map(i => Math.round(parseInt(hex.substr(i, 2), 16) * k).toString(16).padStart(2, '0')).join('');
let out = '';
function face(p00, p10, p11, p01, nu, nv, bow, k, value) {
  const at = (u, v) => {
    const p = mix(mix(p00, p10, u), mix(p01, p11, u), v);
    return [p[0], p[1] - bow(v) * 4 * u * (1 - u)];
  };
  for (let i = 0; i < nu; i++) for (let j = 0; j < nv; j++) {
    const pts = [at(i / nu, j / nv), at((i + 1) / nu, j / nv), at((i + 1) / nu, (j + 1) / nv), at(i / nu, (j + 1) / nv)];
    const n = Math.max(0, Math.min(11, Math.floor(12 * value((i + .5) / nu, (j + .5) / nv))));
    out += `<polygon points="${pts.map(p => p.map(c => c.toFixed(1)).join()).join(' ')}" fill="${shade(bands[n], k)}"/>`;
  }
}
face(A, D, C, B, 38, 5, v => 2 * (1 - v), .88, (t, s) => 1 - 1.35 * t - ((s > .8 || s < .2) && t < .12 ? .14 : 0));
face(G, E, D, A, 38, 5, v => 2 * v, .8, (t, h) => (.95 - 1.4 * t) * Math.abs(1 - 2 * h) + (t < .55 ? .1 : 0));
face(E, F, C, D, 5, 5, () => 0, .6, () => 0);
document.getElementById('beam').innerHTML = out;
```
